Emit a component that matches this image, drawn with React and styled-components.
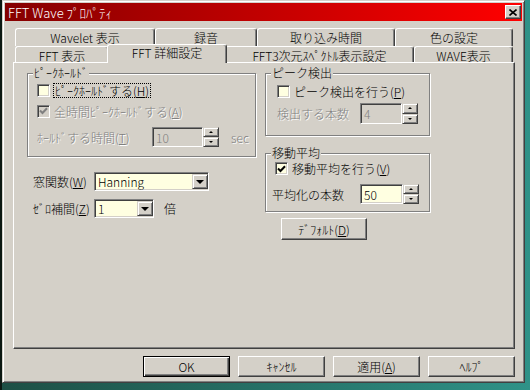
import React from 'react'
import styled, { createGlobalStyle } from 'styled-components'

const face = '#d4d0c8'
const shadow = '#808080'
const dark = '#404040'
const yellow = '#ffffe1'

const GlobalStyle = createGlobalStyle`
  html, body { margin: 0; padding: 0; }
  body {
    width: 530px;
    height: 390px;
    overflow: hidden;
    background: linear-gradient(90deg, #0b1812 0, #0b1812 2px, #1d4f45 2px, #2f9288 100%);
    font-family: "Noto Sans CJK JP", "Noto Sans", sans-serif;
    font-size: 12px;
    font-weight: 300;
    color: #000;
  }
  * { box-sizing: border-box; }
`

const Window = styled.div`
  margin-left: 2px;
  width: 523px;
  height: 383px;
  background: ${face};
  border: 1px solid;
  border-color: ${face} ${dark} ${dark} ${face};
  box-shadow: inset 1px 1px #fff, inset -1px -1px ${shadow};
  padding: 2px;
  display: flex;
  flex-direction: column;
`

const TitleBar = styled.div`
  height: 18px;
  display: flex;
  align-items: center;
  padding-left: 3px;
  background: linear-gradient(90deg, #850000, #ff0000);
  color: #fff;
  font-size: 13px;
`

const CloseButton = styled.div`
  margin-left: auto;
  margin-right: 1px;
  width: 16px;
  height: 14px;
  background: ${face};
  border: 1px solid;
  border-color: #fff ${dark} ${dark} #fff;
  box-shadow: inset -1px -1px ${shadow};
  display: flex;
  align-items: center;
  justify-content: center;
`

const Body = styled.div`
  flex: 1;
  padding: 7px 7px 0 8px;
  display: flex;
  flex-direction: column;
`

const TabRow = styled.div`
  display: flex;
  height: ${(p) => p.$h}px;
  margin-left: 2px;
`

const Tab = styled.div`
  position: relative;
  width: ${(p) => p.$w}px;
  flex: none;
  background: ${face};
  border-top: 1px solid #fff;
  border-left: 1px solid #fff;
  border-right: 1px solid ${dark};
  box-shadow: inset -1px 0 ${shadow};
  border-radius: 3px 3px 0 0;
  display: flex;
  justify-content: center;
  padding-top: ${(p) => (p.$active ? 1 : 2)}px;
  line-height: 13px;
  white-space: nowrap;
  ${(p) =>
    p.$active &&
    `
    z-index: 2;
    margin: -2px -2px -1px;
    height: 19px;
  `}
`

const Panel = styled.div`
  height: 287px;
  border: 1px solid;
  border-color: #fff ${dark} ${dark} #fff;
  box-shadow: inset -1px -1px ${shadow};
  padding: 10px 0 0 13px;
  display: flex;
  gap: 9px;
`

const Column = styled.div`
  width: ${(p) => p.$w}px;
  display: flex;
  flex-direction: column;
`

const Group = styled.div`
  position: relative;
  height: ${(p) => p.$h}px;
  margin-top: ${(p) => p.$mt || 0}px;
  border: 1px solid ${shadow};
  box-shadow: 1px 1px 0 #fff, inset 1px 1px 0 #fff;
  padding: ${(p) => p.$pad};
  display: flex;
  flex-direction: column;
`

const Legend = styled.div`
  position: absolute;
  top: -8px;
  left: 5px;
  padding: 0 1px;
  background: ${face};
  line-height: 14px;
`

const Row = styled.div`
  display: flex;
  align-items: center;
  height: ${(p) => p.$h || 14}px;
  margin-top: ${(p) => p.$mt || 0}px;
  margin-left: ${(p) => p.$ml || 0}px;
`

const Label = styled.span`
  flex: none;
  width: ${(p) => (p.$w ? `${p.$w}px` : 'auto')};
  margin-left: ${(p) => p.$ml || 0}px;
  line-height: 13px;
  white-space: nowrap;
  color: ${(p) => (p.$disabled ? shadow : '#000')};
  text-shadow: ${(p) => (p.$disabled ? '1px 1px 0 #fff' : 'none')};
  outline: ${(p) => (p.$focus ? '1px dotted #000' : 'none')};
  outline-offset: 0;
  padding: ${(p) => (p.$focus ? '0 1px' : '0')};
`

const Box = styled.div`
  flex: none;
  width: 13px;
  height: 13px;
  border: 1px solid;
  border-color: ${shadow} #fff #fff ${shadow};
  box-shadow: inset 1px 1px ${dark}, inset -1px -1px ${face};
  background: ${(p) => (p.$disabled ? face : yellow)};
  display: flex;
  align-items: center;
  justify-content: center;
  margin-right: 4px;
`

const Edit = styled.div`
  flex: none;
  width: ${(p) => p.$w}px;
  height: ${(p) => p.$h || 20}px;
  border: 1px solid;
  border-color: ${shadow} #fff #fff ${shadow};
  box-shadow: inset 1px 1px ${dark}, inset -1px -1px ${face};
  background: ${(p) => (p.$disabled ? face : yellow)};
  color: ${(p) => (p.$disabled ? shadow : '#000')};
  display: flex;
  align-items: center;
  padding: 0 2px 0 3px;
  line-height: 13px;
`

const SpinBox = styled.div`
  flex: none;
  width: 16px;
  height: ${(p) => p.$h || 20}px;
  display: flex;
  flex-direction: column;
`

const Raised = styled.div`
  flex: 1;
  background: ${face};
  border: 1px solid;
  border-color: ${face} ${dark} ${dark} ${face};
  box-shadow: inset 1px 1px #fff, inset -1px -1px ${shadow};
  display: flex;
  align-items: center;
  justify-content: center;
`

const Arrow = styled.div`
  width: 0;
  height: 0;
  border-left: ${(p) => p.$s}px solid transparent;
  border-right: ${(p) => p.$s}px solid transparent;
  ${(p) => (p.$up ? 'border-bottom' : 'border-top')}: ${(p) => p.$t}px solid #000;
`

const DropButton = styled(Raised)`
  flex: none;
  margin-left: auto;
  width: 16px;
  height: 15px;
  margin-right: -1px;
`

const Combo = styled(Edit)`
  padding-right: 1px;
`

const PushButton = styled.div`
  flex: none;
  width: ${(p) => p.$w}px;
  height: ${(p) => p.$h}px;
  margin-left: ${(p) => p.$ml || 0}px;
  margin-top: ${(p) => p.$mt || 0}px;
  background: ${face};
  border: 1px solid;
  border-color: ${(p) => (p.$default ? '#000' : `#fff ${dark} ${dark} #fff`)};
  box-shadow: ${(p) =>
    p.$default
      ? `inset 1px 1px #fff, inset -1px -1px ${dark}, inset -2px -2px ${shadow}`
      : `inset -1px -1px ${shadow}`};
  display: flex;
  align-items: center;
  justify-content: center;
  line-height: 13px;
`

const ButtonBar = styled.div`
  display: flex;
  justify-content: flex-end;
  gap: 8px;
  margin-top: 7px;
`

const Check = ({ checked, disabled }) => (
  <Box $disabled={disabled}>
    {checked && (
      <svg width="9" height="8" viewBox="0 0 9 8">
        <polyline
          points="1,3.5 3.5,6 8,1.2"
          fill="none"
          stroke={disabled ? shadow : '#000'}
          strokeWidth="2"
        />
      </svg>
    )}
  </Box>
)

const Spin = ({ h }) => (
  <SpinBox $h={h}>
    <Raised>
      <Arrow $up $s={2} $t={2} />
    </Raised>
    <Raised>
      <Arrow $s={2} $t={2} />
    </Raised>
  </SpinBox>
)

const Drop = () => (
  <DropButton>
    <Arrow $s={4} $t={4} />
  </DropButton>
)

export default function App() {
  return (
    <>
      <GlobalStyle />
      <Window>
        <TitleBar>
          FFT Wave ﾌﾟﾛﾊﾟﾃｨ
          <CloseButton>
            <svg width="8" height="7" viewBox="0 0 8 7">
              <path d="M0.5 0.5 L7.5 6.5 M7.5 0.5 L0.5 6.5" stroke="#000" strokeWidth="1.6" />
            </svg>
          </CloseButton>
        </TitleBar>
        <Body>
          <TabRow $h={18}>
            <Tab $w={140}>Wavelet 表示</Tab>
            <Tab $w={102}>録音</Tab>
            <Tab $w={138}>取り込み時間</Tab>
            <Tab $w={118}>色の設定</Tab>
          </TabRow>
          <TabRow $h={16}>
            <Tab $w={94}>FFT 表示</Tab>
            <Tab $w={120} $active>
              FFT 詳細設定
            </Tab>
            <Tab $w={189}>FFT3次元ｽﾍﾟｸﾄﾙ表示設定</Tab>
            <Tab $w={99}>WAVE表示</Tab>
          </TabRow>
          <Panel>
            <Column $w={229}>
              <Group $h={84} $pad="9px 0 0 9px">
                <Legend>ﾋﾟｰｸﾎｰﾙﾄﾞ</Legend>
                <Row $h={14}>
                  <Check />
                  <Label $focus>
                    ﾋﾟｰｸﾎｰﾙﾄﾞする(<u>H</u>)
                  </Label>
                </Row>
                <Row $h={14} $mt={7}>
                  <Check checked disabled />
                  <Label $disabled>
                    全時間ﾋﾟｰｸﾎｰﾙﾄﾞする(<u>A</u>)
                  </Label>
                </Row>
                <Row $h={20} $mt={9}>
                  <Label $w={115} $disabled>
                    ﾎｰﾙﾄﾞする時間(<u>T</u>)
                  </Label>
                  <Edit $w={51} $disabled>
                    10
                  </Edit>
                  <Spin />
                  <Label $ml={12} $disabled>
                    sec
                  </Label>
                </Row>
              </Group>
              <Row $h={19} $mt={15} $ml={6}>
                <Label $w={61}>
                  窓関数(<u>W</u>)
                </Label>
                <Combo $w={115} $h={19}>
                  Hanning
                  <Drop />
                </Combo>
              </Row>
              <Row $h={19} $mt={8} $ml={6}>
                <Label $w={61}>
                  ｾﾞﾛ補間(<u>Z</u>)
                </Label>
                <Combo $w={60} $h={19}>
                  1
                  <Drop />
                </Combo>
                <Label $ml={10}>倍</Label>
              </Row>
            </Column>
            <Column $w={165}>
              <Group $h={63} $pad="11px 0 0 11px">
                <Legend>ピーク検出</Legend>
                <Row $h={13}>
                  <Check />
                  <Label>
                    ピーク検出を行う(<u>P</u>)
                  </Label>
                </Row>
                <Row $h={21} $mt={5}>
                  <Label $w={83} $disabled>
                    検出する本数
                  </Label>
                  <Edit $w={42} $h={21} $disabled>
                    4
                  </Edit>
                  <Spin h={21} />
                </Row>
              </Group>
              <Group $h={59} $mt={17} $pad="8px 0 0 6px">
                <Legend>移動平均</Legend>
                <Row $h={13} $ml={3}>
                  <Check checked />
                  <Label>
                    移動平均を行う(<u>V</u>)
                  </Label>
                </Row>
                <Row $h={20} $mt={9}>
                  <Label $w={88}>平均化の本数</Label>
                  <Edit $w={43}>50</Edit>
                  <Spin />
                </Row>
              </Group>
              <PushButton $w={86} $h={22} $ml={16} $mt={6}>
                ﾃﾞﾌｫﾙﾄ(<u>D</u>)
              </PushButton>
            </Column>
          </Panel>
          <ButtonBar>
            <PushButton $w={87} $h={21} $default>
              OK
            </PushButton>
            <PushButton $w={87} $h={21}>
              ｷｬﾝｾﾙ
            </PushButton>
            <PushButton $w={87} $h={21}>
              適用(<u>A</u>)
            </PushButton>
            <PushButton $w={87} $h={21}>
              ﾍﾙﾌﾟ
            </PushButton>
          </ButtonBar>
        </Body>
      </Window>
    </>
  )
}
